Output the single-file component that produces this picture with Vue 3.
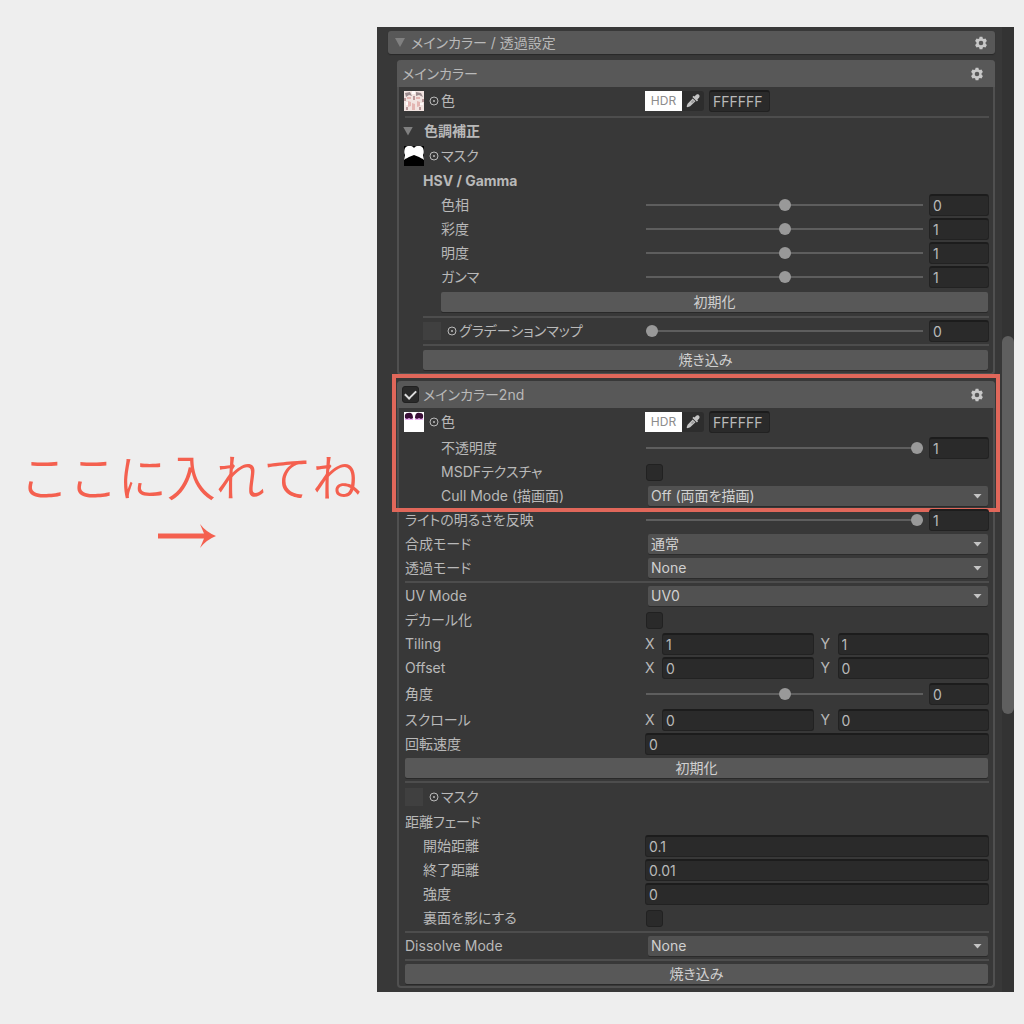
<script setup>
import { reactive } from 'vue'

const sections = reactive([
  {
    id: 'main',
    title: 'メインカラー',
    toggle: false,
    groups: [
      {
        highlight: false,
        rows: [
          { type: 'color', label: '色', thumb: 'faces', hex: 'FFFFFF', size: 'large' },
          { type: 'line' },
          { type: 'foldout', label: '色調補正' },
          { type: 'texture', label: 'マスク', thumb: 'mask', size: 'medium' },
          { type: 'heading', label: 'HSV / Gamma', indent: 1 },
          { type: 'slider', label: '色相', value: '0', pos: 50, indent: 2 },
          { type: 'slider', label: '彩度', value: '1', pos: 50, indent: 2 },
          { type: 'slider', label: '明度', value: '1', pos: 50, indent: 2 },
          { type: 'slider', label: 'ガンマ', value: '1', pos: 50, indent: 2 },
          { type: 'button', label: '初期化', indent: 2, size: 'medium' },
          { type: 'line', indent: 1 },
          { type: 'slider', label: 'グラデーションマップ', value: '0', pos: 0, indent: 1, thumb: 'empty' },
          { type: 'line', indent: 1 },
          { type: 'button', label: '焼き込み', indent: 1, size: 'medium' },
        ],
      },
    ],
  },
  {
    id: 'second',
    title: 'メインカラー2nd',
    toggle: true,
    groups: [
      {
        highlight: true,
        rows: [
          { type: 'color', label: '色', thumb: 'lashes', hex: 'FFFFFF', size: 'large' },
          { type: 'slider', label: '不透明度', value: '1', pos: 100, indent: 2 },
          { type: 'check', label: 'MSDFテクスチャ', indent: 2 },
          { type: 'select', label: 'Cull Mode (描画面)', value: 'Off (両面を描画)', indent: 2 },
        ],
      },
      {
        highlight: false,
        rows: [
          { type: 'slider', label: 'ライトの明るさを反映', value: '1', pos: 100 },
          { type: 'select', label: '合成モード', value: '通常' },
          { type: 'select', label: '透過モード', value: 'None' },
          { type: 'line' },
          { type: 'select', label: 'UV Mode', value: 'UV0' },
          { type: 'check', label: 'デカール化' },
          { type: 'vector', label: 'Tiling', x: '1', y: '1' },
          { type: 'vector', label: 'Offset', x: '0', y: '0' },
          { type: 'slider', label: '角度', value: '0', pos: 50, size: 'large' },
          { type: 'vector', label: 'スクロール', x: '0', y: '0' },
          { type: 'field', label: '回転速度', value: '0' },
          { type: 'button', label: '初期化' },
          { type: 'line' },
          { type: 'texture', label: 'マスク', thumb: 'empty', size: 'medium' },
          { type: 'text', label: '距離フェード' },
          { type: 'field', label: '開始距離', value: '0.1', indent: 1 },
          { type: 'field', label: '終了距離', value: '0.01', indent: 1 },
          { type: 'field', label: '強度', value: '0', indent: 1 },
          { type: 'check', label: '裏面を影にする', indent: 1 },
          { type: 'line' },
          { type: 'select', label: 'Dissolve Mode', value: 'None' },
          { type: 'line' },
          { type: 'button', label: '焼き込み' },
        ],
      },
    ],
  },
])

const key = (s, g, r) => `${s.id}-${g}-${r}`
</script>

<template>
  <main class="page">
    <svg class="defs" aria-hidden="true">
      <symbol id="gear" viewBox="0 0 14 14">
        <path fill-rule="evenodd" d="M5.6 .8h2.8l.4 1.7 1 .6 1.7-.5 1.4 2.4-1.3 1.2v1.6l1.3 1.2-1.4 2.4-1.7-.5-1 .6-.4 1.7H5.600l-.4-1.7-1-.6-1.700.5-1.400-2.400 1.300-1.200V6.200L1.100 5l1.400-2.400 1.700.5 1-.6zM7 4.700a2.300 2.300 0 1 0 0 4.600 2.300 2.300 0 0 0 0-4.600z" />
      </symbol>
      <symbol id="dropper" viewBox="0 0 16 16">
        <path d="M9.300 3.600 11.300 1.700c1.800-1.500 4.300.8 2.900 2.700l-1.900 2 .8.900-1.200 1.200L7.400 4l1.200-1.200z" />
        <path d="M7.700 5.400l2.800 2.800-5.300 5.100-2.800 1-.8-.8 1-2.800z" />
        <path d="M7.900 7l1.200 1.200-2 2-1.200-1.200z" fill="#999" />
      </symbol>
    </svg>

    <aside class="note">
      <p class="note-text">ここに入れてね</p>
      <svg class="arrow" viewBox="0 0 58 24" aria-hidden="true">
        <path d="M0 9.500h46L42 0q6 8 16 12-10 4-16 12l4-9.500H0z" />
      </svg>
    </aside>

    <section class="panel">
      <div class="content">
        <header class="bar">
          <button class="bar-title" type="button"><i class="tri"></i>メインカラー / 透過設定</button>
          <button class="gear" type="button" aria-label="設定"><svg><use href="#gear" /></svg></button>
        </header>

        <section v-for="s in sections" :key="s.id" class="box">
          <div v-for="(group, g) in s.groups" :key="g" class="group">
            <header v-if="g === 0" class="box-head">
              <label v-if="s.toggle" class="box-title">
                <input class="check" type="checkbox" checked />{{ s.title }}
              </label>
              <h2 v-else class="box-title">{{ s.title }}</h2>
              <button class="gear" type="button" aria-label="設定"><svg><use href="#gear" /></svg></button>
            </header>

            <template v-for="(row, r) in group.rows" :key="r">
              <hr v-if="row.type === 'line'" :class="['line', `indent-${row.indent || 0}`]" />

              <div v-else-if="row.type === 'button'" :class="['row-wide', row.size, `indent-${row.indent || 0}`]">
                <button class="action" type="button">{{ row.label }}</button>
              </div>

              <div v-else-if="row.type === 'foldout'" class="row-wide">
                <button class="fold" type="button"><i class="tri"></i>{{ row.label }}</button>
              </div>

              <h3 v-else-if="row.type === 'heading'" :class="['row-wide', 'heading', `indent-${row.indent}`]">{{ row.label }}</h3>

              <div v-else :class="['row', row.size]">
                <div :class="['name', `indent-${row.indent || 0}`]">
                  <template v-if="row.thumb">
                    <span v-if="row.thumb === 'empty'" class="slot"></span>
                    <svg v-else-if="row.thumb === 'faces'" class="thumb" viewBox="0 0 20 20" aria-hidden="true">
                      <path fill="#f2e4e1" d="M0 0h20v20H0z" />
                      <path fill="#9a8a8d" d="M1 2l5-1 2 4-3-1-3 2zM12 1l5 1 2 4-4-2-3 1z" />
                      <path fill="#e3b5b2" d="M3 6h4v2H3zM12 6h4v2h-4zM4 10l3 1v4l-3 1zM13 10l3 1v4l-3 1zM8 12l3 1v6H8z" />
                      <path fill="#b8989a" d="M0 7h2v3H0zM9 5h2v4H9zM18 8h2v3h-2zM2 16h2v3H2zM15 16h2v3h-2z" />
                      <path fill="#fffafa" d="M8 0h3v3H8zM2 11h2v3H2zM16 12h3v2h-3z" />
                    </svg>
                    <svg v-else-if="row.thumb === 'mask'" class="thumb" viewBox="0 0 20 20" aria-hidden="true">
                      <path d="M0 0h20v20H0z" />
                      <path fill="#fff" d="M1 2C3-1 8-1 10 2c2-3 7-3 9 0 1 3 1 5 0 7l1 5c-2-2-4-2-5-3l-5-2-5 2c-1 1-3 1-5 3l1-5C0 7 0 5 1 2z" />
                    </svg>
                    <svg v-else class="thumb" viewBox="0 0 20 20" aria-hidden="true">
                      <path fill="#fff" d="M0 0h20v20H0z" />
                      <path fill="#e9aef0" d="M1 5h8v3H1zM11 5h8v3h-8z" />
                      <path fill="#3b1038" d="M1 6Q0 1 4 1q5-1 5 5L7 7 5 6 3 7zM11 6q0-6 5-5 4 0 3 5l-2 1-2-1-2 1z" />
                    </svg>
                    <svg class="pick" viewBox="0 0 10 10" aria-hidden="true">
                      <circle cx="5" cy="5" r="4" /><circle class="dot" cx="5" cy="5" r="1" />
                    </svg>
                  </template>
                  <label :for="key(s, g, r)">{{ row.label }}</label>
                </div>

                <div v-if="row.type === 'color'" class="value">
                  <button class="swatch" type="button">HDR</button>
                  <button class="dropper" type="button" aria-label="スポイト"><svg><use href="#dropper" /></svg></button>
                  <input :id="key(s, g, r)" v-model="row.hex" class="field hex" type="text" />
                </div>
                <div v-else-if="row.type === 'slider'" class="value slider">
                  <input v-model="row.pos" class="range" type="range" min="0" max="100" :aria-label="row.label" />
                  <input :id="key(s, g, r)" v-model="row.value" class="field number" type="text" />
                </div>
                <div v-else-if="row.type === 'check'" class="value">
                  <input :id="key(s, g, r)" class="check" type="checkbox" />
                </div>
                <div v-else-if="row.type === 'select'" class="value select">
                  <select :id="key(s, g, r)"><option>{{ row.value }}</option></select>
                </div>
                <div v-else-if="row.type === 'vector'" class="value vector">
                  <label :for="key(s, g, r)">X</label>
                  <input :id="key(s, g, r)" v-model="row.x" class="field" type="text" />
                  <label class="second" :for="key(s, g, r) + 'y'">Y</label>
                  <input :id="key(s, g, r) + 'y'" v-model="row.y" class="field" type="text" />
                </div>
                <div v-else-if="row.type === 'field'" class="value">
                  <input :id="key(s, g, r)" v-model="row.value" class="field" type="text" />
                </div>
              </div>
            </template>
            <div v-if="group.highlight" class="highlight"></div>
          </div>
        </section>
      </div>

      <div class="scrollbar"><div class="scroll-thumb"></div></div>
    </section>
  </main>
</template>

<style>
body {
  margin: 0;
  background: #eee;
}
</style>

<style scoped>
* {
  box-sizing: border-box;
}

.page {
  display: grid;
  grid-template-columns: 377fr 637fr;
  padding: 27px 10px 32px 0;
  color: #b9b9b9;
  font: 14px/20px Inter, "Noto Sans CJK JP", sans-serif;
  font-feature-settings: "palt";
}

button,
input,
select {
  margin: 0;
  padding: 0;
  border: 0;
  color: inherit;
  font: inherit;
  font-feature-settings: inherit;
}

button {
  background: none;
}

.defs {
  position: absolute;
  width: 0;
  height: 0;
}

.note {
  display: flex;
  flex-direction: column;
  align-items: center;
  padding: 416px 4px 0 0;
  color: #f4604f;
}

.note-text {
  margin: 0;
  padding-left: 8px;
  font: 350 49px/64px "Noto Sans CJK JP", sans-serif;
  font-feature-settings: normal;
  white-space: nowrap;
}

.arrow {
  width: 58px;
  height: 24px;
  margin-top: 17px;
  fill: currentColor;
}

.panel {
  display: flex;
  background: #383838;
}

.content {
  display: flex;
  flex: 1;
  flex-direction: column;
  gap: 6px;
  min-width: 0;
  padding: 4px 7px 4px 11px;
}

.bar,
.box-head {
  display: flex;
  align-items: center;
  justify-content: space-between;
  background: #585858;
}

.bar {
  height: 23px;
  padding: 0 7px;
  border-radius: 3px;
  box-shadow: 0 1px 1px #282828;
}

.bar-title,
.fold {
  display: flex;
  align-items: center;
}

.bar-title {
  gap: 6px;
}

.tri {
  width: 10px;
  height: 9px;
  background: #808080;
  clip-path: polygon(0 0, 100% 0, 50% 100%);
}

.gear {
  display: flex;
}

.gear svg {
  width: 14px;
  height: 14px;
  fill: #c8c8c8;
}

.box {
  margin-left: 9px;
  border: 2px solid #505050;
  border-top: 0;
  border-radius: 4px;
}

.group {
  position: relative;
}

.box-head {
  height: 27px;
  margin: 0 -2px;
  padding: 0 11px 0 5px;
  border-radius: 4px 4px 0 0;
}

.box-title {
  display: flex;
  align-items: center;
  gap: 4px;
  margin: 0;
  font-size: 14px;
  font-weight: 400;
}

.highlight {
  position: absolute;
  inset: -7px -7px -4px;
  border: 4px solid #e0675a;
  pointer-events: none;
}

.row {
  display: grid;
  grid-template-columns: minmax(0, 240fr) minmax(0, 344fr);
  align-items: center;
  height: 24px;
  padding: 0 4px 0 6px;
}

.row-wide {
  display: flex;
  align-items: center;
  height: 24px;
  margin: 0 5px 0 6px;
}

.medium {
  height: 26px;
}

.large {
  height: 28px;
}

.indent-1 {
  padding-left: 18px;
}

.indent-2 {
  padding-left: 36px;
}

.line {
  height: 2px;
  margin: 1px 4px 1px 6px;
  padding: 0;
  border: 0;
  background: #4d4d4d;
}

.line.indent-1 {
  margin-left: 24px;
}

.heading {
  font-size: 14px;
  font-weight: 700;
}

.fold {
  gap: 11px;
  margin-left: -2px;
  font-weight: 700;
}

.action {
  flex: 1;
  height: 20px;
  border-radius: 2px;
  background: #585858;
  color: #d0d0d0;
  box-shadow: 0 1px 0 #292929;
}

.name {
  display: flex;
  align-items: center;
  white-space: nowrap;
}

.thumb {
  width: 20px;
  height: 20px;
  margin-left: -1px;
}

.slot {
  width: 18px;
  height: 18px;
  margin-right: 1px;
  background: #404040;
}

.pick {
  width: 10px;
  height: 10px;
  margin: 0 2px 0 5px;
  fill: none;
  stroke: #b9b9b9;
}

.pick .dot {
  fill: #b9b9b9;
  stroke: none;
}

.value {
  display: flex;
  align-items: center;
}

.field {
  flex: 1;
  width: 0;
  min-width: 0;
  height: 22px;
  padding: 0 3px;
  border: 1px solid #222;
  border-top: 2px solid #1c1c1c;
  border-radius: 3px;
  background: #2a2a2a;
}

.slider {
  gap: 6px;
  padding-left: 1px;
}

.number {
  flex: 0 0 60px;
}

.range {
  flex: 1;
  min-width: 0;
  height: 14px;
  appearance: none;
  background: linear-gradient(#5e5e5e, #5e5e5e) center / 100% 2px no-repeat;
}

.range::-webkit-slider-thumb {
  width: 12px;
  height: 12px;
  appearance: none;
  border-radius: 50%;
  background: #999;
}

.check {
  display: grid;
  place-items: center;
  width: 17px;
  height: 17px;
  margin-left: 1px;
  appearance: none;
  border: 1px solid #212121;
  border-radius: 3px;
  background: #2a2a2a;
}

.check:checked::before {
  width: 9px;
  height: 5px;
  margin-bottom: 3px;
  border: solid #ddd;
  border-width: 0 0 2px 2px;
  content: "";
  transform: rotate(-45deg);
}

.box-head .check {
  margin: 0;
}

.select {
  position: relative;
  padding: 0 1px 0 3px;
}

.select::after {
  position: absolute;
  right: 7px;
  width: 9px;
  height: 5px;
  background: #c4c4c4;
  clip-path: polygon(0 0, 100% 0, 50% 100%);
  content: "";
  pointer-events: none;
}

.select select {
  width: 100%;
  height: 20px;
  padding: 0 20px 0 3px;
  appearance: none;
  border-radius: 2px;
  background: #515151;
  color: #d0d0d0;
  box-shadow: 0 1px 0 #2b2b2b;
}

.vector label {
  flex: 0 0 17px;
}

.vector .second {
  margin-left: 7px;
}

.swatch {
  width: 37px;
  height: 20px;
  background: #fff;
  color: #8c8c8c;
  font-size: 12px;
}

.dropper {
  display: flex;
  align-items: center;
  justify-content: center;
  width: 22px;
  height: 20px;
  margin-right: 5px;
  border-radius: 0 3px 3px 0;
  background: #2d2d2d;
}

.dropper svg {
  width: 16px;
  height: 16px;
  fill: #c4c4c4;
}

.hex {
  flex: 0 0 61px;
}

.scrollbar {
  display: flex;
  flex: 0 0 12px;
  flex-direction: column;
  background: #333;
}

.scrollbar::before {
  flex: 309;
  content: "";
}

.scrollbar::after {
  flex: 278;
  content: "";
}

.scroll-thumb {
  flex: 378;
  border-radius: 6px;
  background: #5f5f5f;
}
</style>
